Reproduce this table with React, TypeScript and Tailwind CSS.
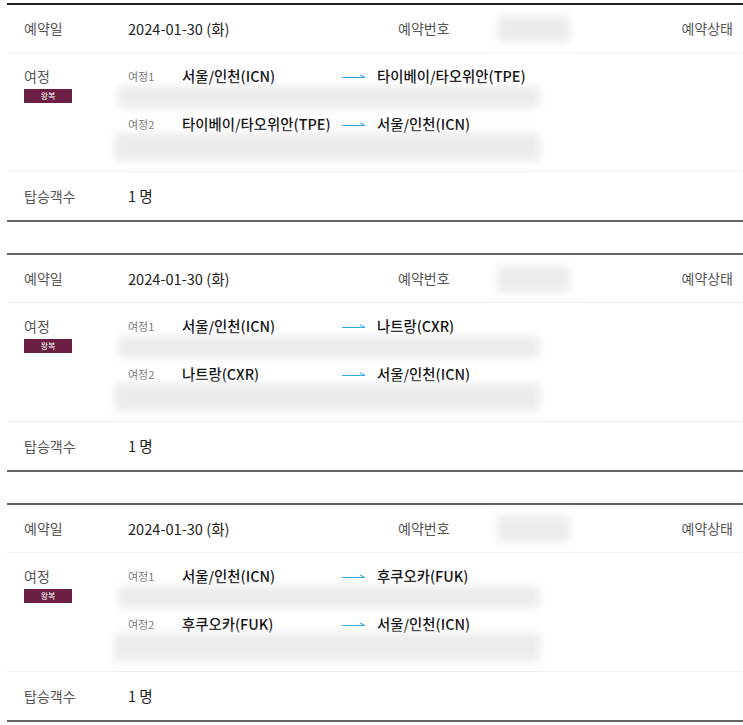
type Leg = { from: string; to: string };

type Booking = { date: string; legs: Leg[] };

const bookings: Booking[] = [
  {
    date: '2024-01-30 (화)',
    legs: [
      { from: '서울/인천(ICN)', to: '타이베이/타오위안(TPE)' },
      { from: '타이베이/타오위안(TPE)', to: '서울/인천(ICN)' },
    ],
  },
  {
    date: '2024-01-30 (화)',
    legs: [
      { from: '서울/인천(ICN)', to: '나트랑(CXR)' },
      { from: '나트랑(CXR)', to: '서울/인천(ICN)' },
    ],
  },
  {
    date: '2024-01-30 (화)',
    legs: [
      { from: '서울/인천(ICN)', to: '후쿠오카(FUK)' },
      { from: '후쿠오카(FUK)', to: '서울/인천(ICN)' },
    ],
  },
];

function Arrow() {
  return (
    <svg width="24" height="6" viewBox="0 0 24 6" className="block">
      <path d="M0 4.5H23M18 2L23 4.5" fill="none" stroke="#2aa8ea" strokeWidth="1" />
    </svg>
  );
}

function Masked({ className }: { className: string }) {
  // hidden personal info, shown as a soft grey smudge
  return <div className={`bg-[#ececec] blur-[4px] ${className}`} />;
}

function BookingCard({ booking, first }: { booking: Booking; first: boolean }) {
  return (
    <div
      className={`border-t-2 border-b-2 border-b-[#666] ${first ? 'border-t-[#222]' : 'border-t-[#666]'}`}
    >
      <div className="flex h-[47px] items-center text-[14px]">
        <span className="w-[121px] pl-[17px] text-[#555]">예약일</span>
        <span className="w-[270px] text-[14.6px] text-[#222]">{booking.date}</span>
        <span className="w-[99px] text-[#555]">예약번호</span>
        <Masked className="h-[26px] w-[73px]" />
        <span className="flex-1" />
        <span className="pr-[10px] text-[#555]">예약상태</span>
      </div>

      <div className="flex border-t border-[#eee] pb-[10px] pt-[13px]">
        <div className="w-[121px] pl-[17px]">
          <p className="text-[14px] leading-[20px] text-[#555]">여정</p>
          <span className="mt-[3px] flex h-[14px] w-[48px] items-center justify-center bg-[#6b1f45] text-[8px] text-white">
            왕복
          </span>
        </div>
        <div className="flex flex-col">
          {booking.legs.map((leg, i) => (
            <div key={i} className={i > 0 ? 'mt-[6px]' : ''}>
              <div className="flex h-[20px] items-center">
                <span className="w-[54px] text-[11px] text-[#777]">여정{i + 1}</span>
                <span className="w-[160px] text-[14.4px] font-medium text-[#111]">{leg.from}</span>
                <span className="w-[35px]">
                  <Arrow />
                </span>
                <span className="text-[14.4px] font-medium text-[#111]">{leg.to}</span>
              </div>
              {i === 0 ? (
                <Masked className="ml-[-10px] h-[22px] w-[422px]" />
              ) : (
                <Masked className="ml-[-14px] mt-[-1px] h-[28px] w-[426px]" />
              )}
            </div>
          ))}
        </div>
      </div>

      <div className="flex h-[49px] items-center border-t border-[#eee] text-[14px]">
        <span className="w-[121px] pl-[17px] text-[#555]">탑승객수</span>
        <span className="text-[14.6px] text-[#222]">1 명</span>
      </div>
    </div>
  );
}

export default function App() {
  return (
    <div className="min-h-screen overflow-hidden bg-white pl-[7px] pt-[3px] font-['Noto_Sans_CJK_KR','Noto_Sans',sans-serif]">
      <div className="flex flex-col gap-[31px]">
        {bookings.map((b, i) => (
          <BookingCard key={i} booking={b} first={i === 0} />
        ))}
      </div>
    </div>
  );
}
